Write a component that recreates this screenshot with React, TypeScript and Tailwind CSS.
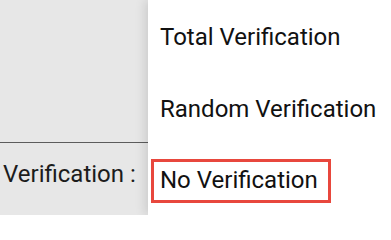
import React from "react";

export default function App() {
  return (
    <div
      className="w-[391px] h-[215px] flex bg-[#e7e7e7] overflow-hidden text-[24px] text-[#1c1c1c]"
      style={{ fontFamily: "Roboto, 'Noto Sans', sans-serif" }}
    >
      <div className="w-[148px] shrink-0 flex flex-col">
        <div className="h-[143px] border-b border-[#5c5c5c]" />
        <div className="pt-[19px] pl-[3px] leading-[24px] whitespace-nowrap">Verification :</div>
      </div>
      <div className="flex-1 bg-white pt-[1px] shadow-[-3px_0_10px_rgba(0,0,0,0.12)] z-10 text-[#111]">
        <div className="h-[72px] leading-[72px] pl-[12px] whitespace-nowrap">Total Verification</div>
        <div className="h-[72px] leading-[72px] pl-[12px] whitespace-nowrap">Random Verification</div>
        <div className="h-[72px] pt-[14px] pl-[3px]">
          <div className="inline-block border-[3px] border-[#e8473d] pl-[6px] pr-[10px] pt-[6px] pb-[8px] leading-[24px] whitespace-nowrap">
            No Verification
          </div>
        </div>
      </div>
    </div>
  );
}
